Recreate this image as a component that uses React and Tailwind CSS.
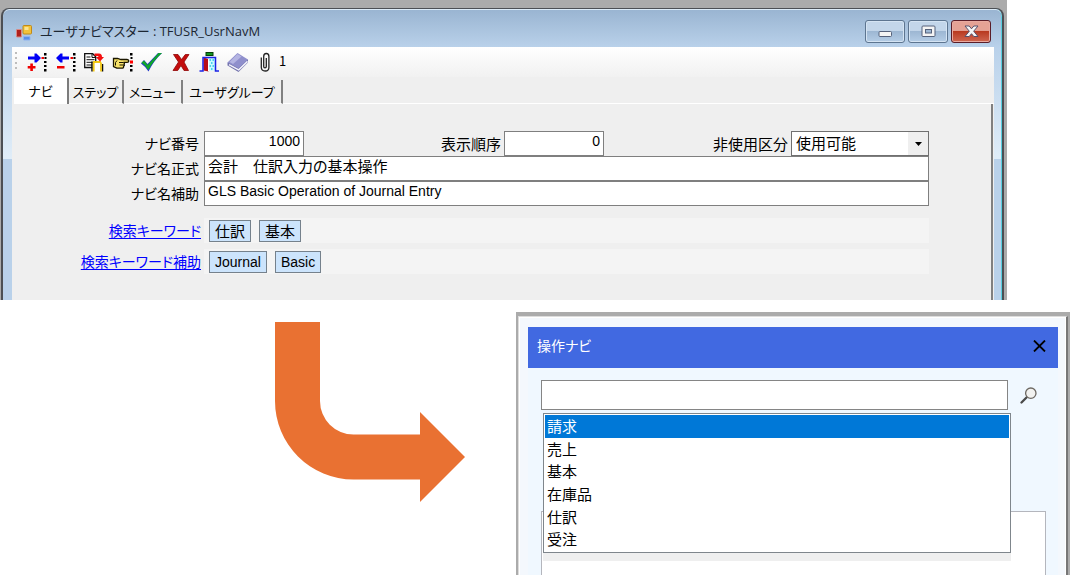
import React, { useState } from "react";

const fieldBox =
  "block h-[25px] w-full border border-[#7f7f7f] bg-white px-[3px] pb-[6px] leading-[17px] text-black outline-none";
const latin = "font-['Liberation_Sans','Noto_Sans_CJK_JP',sans-serif] text-[14px]";

function AppIcon() {
  return (
    <svg width="18" height="18" viewBox="15 22 18 18" aria-hidden="true">
      <rect x="23" y="24.500" width="8.500" height="8.500" rx="1" fill="#f3c23a" stroke="#c08a1a" />
      <rect x="24.500" y="26" width="4" height="3" fill="#fbe491" />
      <rect x="16.500" y="28.500" width="5" height="7.500" rx="0.500" fill="#b0201c" stroke="#d78a86" />
      <rect x="23.500" y="35.500" width="6.500" height="3.500" rx="0.500" fill="#5b8fe8" stroke="#8fb3f0" />
    </svg>
  );
}

function DashColumn({ x, redMiddle }) {
  return (
    <g fill="#000">
      <rect x={x} y="53" width="2.500" height="2.500" />
      <rect x={x + 0.5} y="57" width="2" height="2" />
      {redMiddle ? (
        <rect x={x} y="60.500" width="3" height="3" fill="#f00" />
      ) : (
        <rect x={x} y="61" width="2.500" height="2" />
      )}
      <rect x={x} y="65" width="2.500" height="2" />
      <rect x={x} y="69" width="2.500" height="2.500" />
    </g>
  );
}

const tools = [
  {
    name: "行挿入",
    art: (
      <>
        <path d="M28 56.500h6.500V53.500h2l4.500 4.500-4.500 4.500h-2v-3H28z" fill="#0000f5" />
        <path d="M30.300 63.500h2.600v2.500h2.600v2.500h-2.600v2.500h-2.600v-2.500h-2.600V66h2.600z" fill="#f00000" />
        <rect x="41.500" y="57" width="2.500" height="2" fill="#f00000" />
        <DashColumn x={44} />
      </>
    ),
  },
  {
    name: "行削除",
    art: (
      <>
        <path d="M69 56.500h-6.500V53.500h-2L56 58l4.500 4.500h2v-3H69z" fill="#0000f5" />
        <rect x="57" y="66" width="7.500" height="2.500" fill="#f00000" />
        <rect x="70.500" y="57" width="2.500" height="2" fill="#f00000" />
        <DashColumn x={73} />
      </>
    ),
  },
  {
    name: "複写",
    art: (
      <>
        <path d="M84.700 53.700h8l3 3V67.500H84.700z" fill="#fff" stroke="#111" strokeWidth="1.300" />
        <path d="M92 53.500v4h4M86.500 57h4M86.500 59.700h8M86.500 62.300h8M86.500 65h7" fill="none" stroke="#111" strokeWidth="1" />
        <path d="M92.500 62.500h9v9h-9z" fill="#fff" />
        <path d="M92 61.500v10M102.500 64v7.500" stroke="#111" strokeWidth="1.500" />
        <path d="M93.700 61.500v10M101 62.500v9M93 62h8" fill="none" stroke="#f2c713" strokeWidth="1.800" />
        <path d="M94.500 53.500h4.500q3 0 3 3.500h2L100 61.500 95.800 57h2.700q0-1-1.300-1h-2.700z" fill="#f41010" />
      </>
    ),
  },
  {
    name: "参照",
    art: (
      <>
        <path
          d="M113.500 58.500h4l3.500 1h6q1.800.200 1.800 1.500t-1.800 1.400h-3.500q1.300.700.700 1.800 .600 1.300-.600 2 .300 2-1.800 2h-5l-3.300-1.700z"
          fill="#f8e36a"
          stroke="#1a1600"
          strokeWidth="1.300"
        />
        <path d="M119 62.500h4.500M119.500 65h4.500M117 60.500l-1.500 2v3" fill="none" stroke="#1a1600" strokeWidth="1" />
        <DashColumn x={130} redMiddle />
      </>
    ),
  },
  {
    name: "確定",
    art: (
      <>
        <path d="M141 63.500l3-3.500 3.500 4L158 53h4q-8.500 8-13.500 18.500-3-5-7.500-8z" fill="#2238c8" />
        <path d="M141.500 62.500l2.500-2 3.700 4.500L158.500 53h3.500q-8.500 7.500-13.800 17-2.500-4.500-6.700-7.500z" fill="#0fa629" />
      </>
    ),
  },
  {
    name: "取消",
    art: (
      <path
        d="M173.500 54.500h4.500l3.500 5 3.800-5h3.700l-5 7.500 4.500 8.500h-4.500l-3-5-3.300 5h-4.700l5.500-8.500z"
        fill="#c40d0d"
        stroke="#8f0505"
        strokeWidth="0.800"
      />
    ),
  },
  {
    name: "終了",
    art: (
      <>
        <rect x="206" y="52.500" width="7" height="3" fill="#129522" stroke="#054009" />
        <rect x="208" y="58" width="7" height="12.500" fill="#c8fbff" />
        <path d="M209.500 60h1.500m1.500 0h1.500m-3 3h1.500m-3 3h1.500m1.500 0h1.500m-3 3h1.500" stroke="#25c3e8" strokeWidth="1.500" />
        <path d="M203.500 57.500l5 1.500v12.500l-5-1z" fill="#b80d18" />
        <path d="M208.500 59v12" stroke="#fff" strokeWidth="1" />
        <path d="M199.500 71h3.500V57.500h12.500V71h3.500" fill="none" stroke="#1a22e6" strokeWidth="1.500" />
      </>
    ),
  },
  {
    name: "ヘルプ",
    art: (
      <>
        <path d="M227.500 62.500v3l11 6.500 9.500-9.500v-3z" fill="#7272ac" />
        <path d="M229 64.700l9.700 5.200 8.800-8.500" fill="none" stroke="#f2f2fb" strokeWidth="1.500" />
        <path d="M227.500 62.500L237.500 53l10.500 6.500-9.500 8.800z" fill="#8f8fcc" />
        <path d="M229.500 62L237.500 54l4 2.500-8.500 7.500z" fill="#b4b4e2" />
      </>
    ),
  },
  {
    name: "添付",
    art: (
      <path
        d="M266.300 58v8.500q0 1.300-1.300 1.300t-1.300-1.300V56.500q0-3 2.600-3t2.600 3v11q0 3.500-3.700 3.500t-3.900-3.500V57.500"
        fill="none"
        stroke="#222"
        strokeWidth="1.300"
      />
    ),
  },
];

function Toolbar() {
  return (
    <div className="flex h-[30px] items-start rounded-br-sm bg-linear-to-b from-white to-[#f1f1f1]">
      <div className="flex h-[29px] w-[11px] flex-col items-start gap-[3px] pt-[5px] pl-[3px]">
        <span className="size-[2px] bg-[#bdbdbd]" />
        <span className="size-[2px] bg-[#bdbdbd]" />
        <span className="size-[2px] bg-[#bdbdbd]" />
        <span className="size-[2px] bg-[#bdbdbd]" />
      </div>
      {tools.map((tool, i) => (
        <button key={tool.name} type="button" aria-label={tool.name} className="size-[29px]">
          <svg width="29" height="29" viewBox={`${23 + 29 * i} 47 29 29`} aria-hidden="true">
            {tool.art}
          </svg>
        </button>
      ))}
      <span className="-ml-[5px] pt-[4px] text-[13px] leading-[20px]">1</span>
    </div>
  );
}

function CaptionButtons() {
  const glass =
    "flex h-[23px] w-[40px] items-center justify-center rounded-[3px] border border-[#5d7590] bg-linear-to-b from-[#c3d6ea] from-45% via-[#9db7d3] via-50% to-[#b5cde6] shadow-[inset_0_0_0_1px_#d5e4f3]";
  return (
    <div className="flex gap-[3px] pt-[7px]">
      <button type="button" aria-label="最小化" className={glass}>
        <svg width="15" height="13" viewBox="0 0 15 13">
          <rect x="1" y="6.500" width="12.500" height="5" rx="1" fill="#f4f4f4" stroke="#55617a" />
        </svg>
      </button>
      <button type="button" aria-label="最大化" className={glass}>
        <svg width="15" height="13" viewBox="0 0 15 13">
          <rect x="1" y="1" width="13" height="10.500" rx="1" fill="#f4f4f4" stroke="#55617a" />
          <rect x="4.500" y="4.500" width="6" height="3.500" fill="#9db7d3" stroke="#55617a" />
        </svg>
      </button>
      <button
        type="button"
        aria-label="閉じる"
        className="flex h-[23px] w-[40px] items-center justify-center rounded-[3px] border border-[#5a1d28] bg-linear-to-b from-[#e5a295] from-45% via-[#b93a20] via-50% to-[#cf6650] shadow-[inset_0_0_0_1px_#e9aaa0]"
      >
        <svg width="15" height="13" viewBox="0 0 15 13">
          <path
            d="M1 1h4.200l2.300 2.800L9.800 1H14L9.700 6.200 14 11.500H9.800L7.500 8.700l-2.300 2.800H1l4.300-5.300z"
            fill="#f6f6f6"
            stroke="#55506a"
          />
        </svg>
      </button>
    </div>
  );
}

function Tabs() {
  const rest = [
    { text: "ステップ", width: "w-[55px]" },
    { text: "メニュー", width: "w-[59px]" },
    { text: "ユーザグループ", width: "w-[100px]" },
  ];
  return (
    <div role="tablist" className="flex h-[26px] items-end text-[13px] leading-[22px]">
      <button
        type="button"
        role="tab"
        aria-selected="true"
        className="h-[26px] w-[55px] border-r-2 border-[#7c7c7c] bg-white pb-[1px] text-center"
      >
        ナビ
      </button>
      {rest.map((t) => (
        <button
          key={t.text}
          type="button"
          role="tab"
          aria-selected="false"
          className={`${t.width} h-[24px] border-r-2 border-b border-r-[#808080] border-b-white text-center`}
        >
          {t.text}
        </button>
      ))}
      <span className="h-px flex-1 bg-white" />
    </div>
  );
}

function KeywordRow({ label, words, wordClass }) {
  return (
    <div className="flex h-[25px] items-center">
      <div className="w-[192px] shrink-0 pr-[3px] text-right text-[14px]">
        <a href="#keywords" className="text-[#0000ff] underline underline-offset-2">
          {label}
        </a>
      </div>
      <div className="flex h-[25px] flex-1 items-center gap-[8px] bg-[#f4f4f4] pl-[5px]">
        {words.map((w) => (
          <button
            key={w}
            type="button"
            className={`h-[22px] border border-[#75818c] bg-[#cce4fc] px-[5px] leading-[18px] whitespace-nowrap ${wordClass}`}
          >
            {w}
          </button>
        ))}
      </div>
    </div>
  );
}

function MasterWindow() {
  const [state, setState] = useState("使用可能");
  return (
    <section className="mr-[72px] flex h-[300px] flex-col bg-[#ababab] pt-[8px] pr-[3px] pl-px">
      <div className="flex flex-1 flex-col rounded-t-lg border-x-2 border-t border-[#4c4f54] bg-linear-to-b from-[#99b4d1] to-[#b9d1ea] to-[38px] shadow-[inset_0_1px_0_#dcebf7,inset_-1px_0_0_#56cfe0]">
        <header className="flex h-[38px] shrink-0 items-center justify-between pr-[11px] pl-[12px]">
          <h1 className="flex items-center gap-[7px] pt-[8px] font-['Open_Sans','Noto_Sans_CJK_JP',sans-serif] text-[13px] text-[#1c2733]">
            <AppIcon />
            <span>ユーザナビマスター : TFUSR_UsrNavM</span>
          </h1>
          <CaptionButtons />
        </header>
        <div className="flex flex-1 bg-linear-to-b from-[#b9d1ea] to-[#e0edf8] to-[112px] bg-[length:100%_112px] bg-no-repeat pr-[8px] pl-[9px] shadow-[inset_-1px_0_0_#56cfe0]">
          <main className="flex flex-1 flex-col bg-[#efefef]">
            <Toolbar />
            <div className="pt-[1px] pl-[2px]">
              <Tabs />
            </div>
            <form
              className="mr-px flex flex-1 flex-col border-r-2 border-[#808080] pt-[27px] pr-[62px]"
              onSubmit={(e) => e.preventDefault()}
            >
              <div className="flex flex-col text-[15px]">
                <div className="flex items-center">
                  <label htmlFor="no" className="w-[192px] pr-[5px] text-right text-[14px]">
                    ナビ番号
                  </label>
                  <div className="w-[100px]">
                    <input id="no" defaultValue="1000" className={`${fieldBox} ${latin} text-right`} />
                  </div>
                  <label htmlFor="order" className="ml-[137px] pr-[3px] leading-[22px]">
                    表示順序
                  </label>
                  <div className="w-[100px]">
                    <input id="order" defaultValue="0" className={`${fieldBox} ${latin} text-right`} />
                  </div>
                  <label htmlFor="state" className="ml-auto pr-[3px] leading-[22px]">
                    非使用区分
                  </label>
                  <div className="relative w-[138px]">
                    <select
                      id="state"
                      value={state}
                      onChange={(e) => setState(e.target.value)}
                      className="block h-[25px] w-full appearance-none border border-[#707070] bg-white pb-[2px] pl-[4px] leading-[21px] outline-none"
                    >
                      <option>使用可能</option>
                      <option>使用不可</option>
                    </select>
                    <span className="pointer-events-none absolute inset-y-px right-px flex w-[20px] items-center justify-center bg-[#efefef]">
                      <svg width="7" height="4" viewBox="0 0 7 4">
                        <path d="M0 0h7L3.500 4z" fill="#000" />
                      </svg>
                    </span>
                  </div>
                </div>
                <div className="flex items-center">
                  <label htmlFor="name" className="w-[192px] shrink-0 pr-[5px] text-right text-[14px]">
                    ナビ名正式
                  </label>
                  <input id="name" defaultValue="会計　仕訳入力の基本操作" className={fieldBox} />
                </div>
                <div className="flex items-center">
                  <label htmlFor="sub" className="w-[192px] shrink-0 pr-[5px] text-right text-[14px]">
                    ナビ名補助
                  </label>
                  <input
                    id="sub"
                    defaultValue="GLS Basic Operation of Journal Entry"
                    className={`${fieldBox} ${latin}`}
                  />
                </div>
              </div>
              <div className="flex flex-col gap-[6px] pt-[12px]">
                <KeywordRow label="検索キーワード" words={["仕訳", "基本"]} wordClass="text-[15px]" />
                <KeywordRow label="検索キーワード補助" words={["Journal", "Basic"]} wordClass={latin} />
              </div>
            </form>
          </main>
        </div>
      </div>
    </section>
  );
}

function BentArrow() {
  return (
    <svg width="190" height="180" viewBox="0 0 190 180" className="shrink-0" aria-hidden="true">
      <path
        d="M0 0H45V79A33.500 33.500 0 0 0 78.500 112.500H145V90L190 135l-45 45V157.500H78.500A78.500 78.500 0 0 1 0 79Z"
        fill="#e97132"
      />
    </svg>
  );
}

function NaviPanel() {
  const items = ["請求", "売上", "基本", "在庫品", "仕訳", "受注"];
  const [picked, setPicked] = useState(0);
  return (
    <section className="h-[263px] flex-1 border-t-4 border-r-2 border-l-2 border-[#ababab]">
      <div className="h-full border-t border-r-2 border-l border-t-[#dcdcdc] border-r-[#777] border-l-[#dcdcdc] bg-[#f4f8fd] pt-[10px] pr-[8px] pl-[9px] shadow-[inset_1px_1px_0_#fff,inset_-1px_0_0_#fff]">
        <div className="flex h-full flex-col bg-[#f0f8ff]">
          <header className="flex h-[41px] shrink-0 items-center justify-between bg-[#4169e1] pr-[12px] pb-[4px] pl-[9px]">
            <h2 className="text-[14px] text-white">操作ナビ</h2>
            <button type="button" aria-label="閉じる">
              <svg width="13" height="12" viewBox="0 0 13 12">
                <path d="M1 .500L12 11.500M12 .500L1 11.500" stroke="#000" strokeWidth="1.800" />
              </svg>
            </button>
          </header>
          <div className="flex flex-1 flex-col pt-[12px] pr-[12px] pl-[13px]">
            <div className="flex items-center gap-[12px] pr-[9px]">
              <div className="relative flex-1">
                <input
                  aria-label="検索"
                  className="block h-[30px] w-full border border-[#858585] bg-white px-[4px] text-[15px] outline-none"
                />
                <ul
                  role="listbox"
                  aria-label="検索キーワード候補"
                  className="absolute top-[33px] -right-[3px] left-[2px] z-10 grid h-[140px] grid-rows-6 border border-[#7f868c] bg-white p-px text-[15px] leading-[22px] shadow-[0_8px_0_#efefef]"
                >
                  {items.map((t, i) => (
                    <li
                      key={t}
                      role="option"
                      aria-selected={picked === i}
                      onClick={() => setPicked(i)}
                      className={
                        picked === i
                          ? "bg-[#0078d7] pl-[2px] text-white"
                          : "pl-[2px] text-black"
                      }
                    >
                      {t}
                    </li>
                  ))}
                </ul>
              </div>
              <button type="button" aria-label="検索する">
                <svg width="17" height="17" viewBox="0 0 17 17">
                  <path d="M1.500 15.500l6-6" stroke="#4a4a4a" strokeWidth="2.300" strokeLinecap="round" />
                  <circle cx="10.800" cy="6.200" r="5.200" fill="#f2f2f0" stroke="#6d6862" strokeWidth="1.300" />
                </svg>
              </button>
            </div>
            <div className="mt-[101px] flex-1 border-x border-t border-[#b4b6bd] bg-white" />
          </div>
        </div>
      </div>
    </section>
  );
}

export default function App() {
  return (
    <div className="bg-white font-['Noto_Sans_CJK_JP',sans-serif] text-black [font-feature-settings:'palt']">
      <MasterWindow />
      <div className="flex items-start pt-[12px] pr-[9px] pb-[4px] pl-[275px]">
        <div className="pt-[10px] pr-[51px]">
          <BentArrow />
        </div>
        <NaviPanel />
      </div>
    </div>
  );
}
